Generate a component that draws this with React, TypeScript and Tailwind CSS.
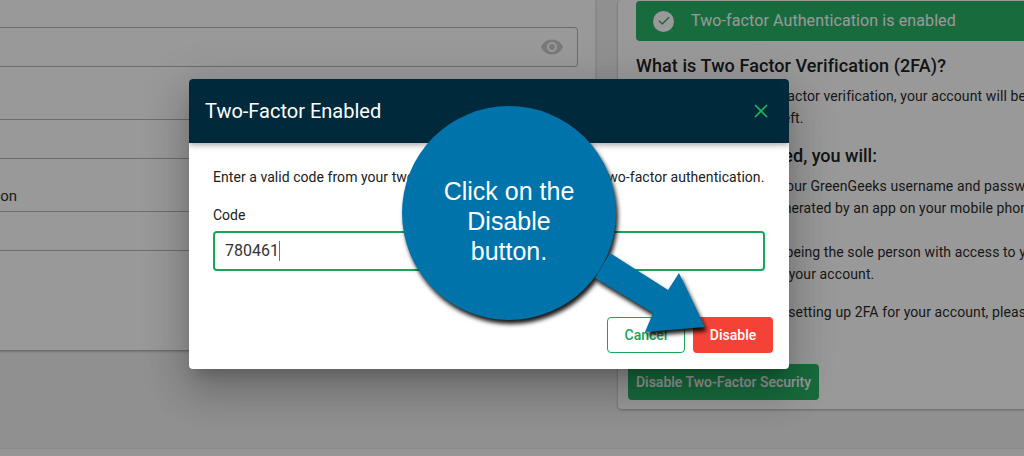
import React from 'react';
import { X, Check } from 'lucide-react';

const leftRows = [
  { h: 'h-[39px]', label: '' },
  { h: 'h-[53px]', label: 'Two-Factor Authentication' },
  { h: 'h-[39px]', label: '' },
  { h: 'h-[100px]', label: '' },
];

const bodyText = 'text-[14px] leading-[22px] tracking-[0.1px]';

const App = () => {
  return (
    <div className="relative w-[1024px] h-[456px] overflow-hidden bg-[#f0f1f2] font-['Roboto',sans-serif] flex flex-col">
      {/* Page behind the dialog */}
      <div className="flex h-[448px] items-start shrink-0">
        <div className="w-[596px] h-[351px] shrink-0 bg-white border-r border-[#e6e6e6] pt-[27px] pr-[17px] shadow-[0_1px_2px_rgba(0,0,0,0.2)]">
          <div className="h-[40px] border border-[#b5b5b5] border-l-0 rounded-r flex items-center justify-end pr-[13px]">
            <svg width="24" height="24" viewBox="0 0 24 24" fill="#cccccc">
              <path d="M12 4.5C7 4.5 2.73 7.61 1 12c1.73 4.39 6 7.5 11 7.5s9.27-3.11 11-7.5c-1.73-4.39-6-7.5-11-7.5zM12 17c-2.76 0-5-2.24-5-5s2.24-5 5-5 5 2.24 5 5-2.24 5-5 5zm0-8c-1.66 0-3 1.34-3 3s1.34 3 3 3 3-1.34 3-3-1.34-3-3-3z" />
            </svg>
          </div>
          <div className="h-[53px] border-b border-[#b5b5b5]" />
          {leftRows.map((row, i) => (
            <div key={i} className={`${row.h} border-b border-[#b5b5b5] flex items-end pb-[4px] text-[15px] text-[#333]`}>
              {row.label && <span className="-ml-[159px] whitespace-nowrap">{row.label}</span>}
            </div>
          ))}
        </div>

        <div className="ml-[22px] w-[500px] shrink-0 h-[409px] bg-white rounded shadow-[0_1px_3px_rgba(0,0,0,0.3)]">
          <div className="ml-[18px] h-[40px] mt-px bg-[#28b267] rounded flex items-center pl-[17px] gap-[14px] text-white text-[16px]">
            <div className="w-[21px] h-[21px] rounded-full bg-white flex items-center justify-center">
              <Check className="w-[14px] h-[14px] text-[#28b267]" strokeWidth={2.5} />
            </div>
            <span className="ml-[3px] tracking-[0.1px]">Two-factor Authentication is enabled</span>
          </div>
          <div className="pl-[18px] text-[#2b2b2b] whitespace-nowrap">
            <h3 className="mt-[14px] text-[18px] leading-[22px] font-medium tracking-[0.08px] text-[#222]">What is Two Factor Verification (2FA)?</h3>
            <p className={`mt-[8px] ${bodyText}`}>When you activate two-factor verification, your account will be more secure</p>
            <p className={bodyText}>more protected from theft.</p>
            <h3 className="mt-[16px] text-[18px] leading-[22px] font-medium text-[#222]">When 2FA is enabled, you will:</h3>
            <p className={`mt-[8px] ${bodyText}`}>Need to sign on, using your GreenGeeks username and password</p>
            <p className={bodyText}>the verification code generated by an app on your mobile phone.</p>
            <p className={`mt-[22px] ${bodyText}`}>Enjoy peace of mind by being the sole person with access to your</p>
            <p className={bodyText}>the security codes from your account.</p>
            <p className={`mt-[16px] ${bodyText}`}>Once you had problems setting up 2FA for your account, please</p>
          </div>
          <button className="ml-[10px] mt-[41px] w-[191px] h-[36px] bg-[#28b267] rounded-sm text-white text-[14px] font-medium">
            Disable Two-Factor Security
          </button>
        </div>
      </div>
      <div className="flex-1 bg-[#f9f9f9] border-t border-[#e6e6e6]" />

      {/* Dim layer */}
      <div className="absolute inset-0 bg-black/40" />

      {/* Dialog */}
      <div className="absolute left-[189px] top-[79px] w-[600px] h-[290px] bg-white rounded shadow-[0_11px_15px_-7px_rgba(0,0,0,0.2),0_24px_38px_3px_rgba(0,0,0,0.14),0_9px_46px_8px_rgba(0,0,0,0.12)] overflow-hidden">
        <div className="h-[64px] bg-[#00293c] flex items-center justify-between pl-[16px] pr-[17px] shadow-[0_2px_6px_rgba(0,0,0,0.35)] relative">
          <h2 className="text-[20px] font-normal text-white">Two-Factor Enabled</h2>
          <X className="w-[22px] h-[22px] text-[#1db660]" strokeWidth={1.9} />
        </div>
        <div className="px-[24px] pt-[24px]">
          <p className="text-[14px] leading-[20px] tracking-[0.05px] text-[#212121] whitespace-nowrap">
            Enter a valid code from your two-factor app in order to disable two-factor authentication.
          </p>
          <label className="block mt-[18px] text-[14px] leading-[20px] text-[#212121]">Code</label>
          <div className="mt-[6px] h-[40px] border-2 border-[#17a557] rounded flex items-center pl-[10px] text-[16px] text-[#333]">
            780461<span className="w-px h-[20px] bg-[#17a557]" />
          </div>
        </div>
        <div className="flex justify-end gap-[8px] pr-[16px] mt-[46px]">
          <button className="w-[78px] h-[36px] border border-[#17a557] rounded-sm text-[14px] font-medium text-[#17a557]">Cancel</button>
          <button className="w-[80px] h-[36px] bg-[#f44336] rounded-sm text-[14px] font-medium text-white">Disable</button>
        </div>
      </div>

      {/* Callout */}
      <svg className="absolute left-[380px] top-[90px] drop-shadow-[2px_4px_2px_rgba(0,0,0,0.9)]" width="350" height="260" viewBox="380 90 350 260">
        <circle cx="509" cy="213" r="107" fill="#0073aa" />
        <path d="M595 278 L653 313 L645 332 L705 327 L679 273 L668 290 L610 253 Z" fill="#0073aa" />
      </svg>
      <div className="absolute left-[439px] top-[176px] w-[140px] text-center text-white text-[25px] leading-[30px] font-['Liberation_Sans',sans-serif]">
        Click on the Disable button.
      </div>
    </div>
  );
};

export default App;
